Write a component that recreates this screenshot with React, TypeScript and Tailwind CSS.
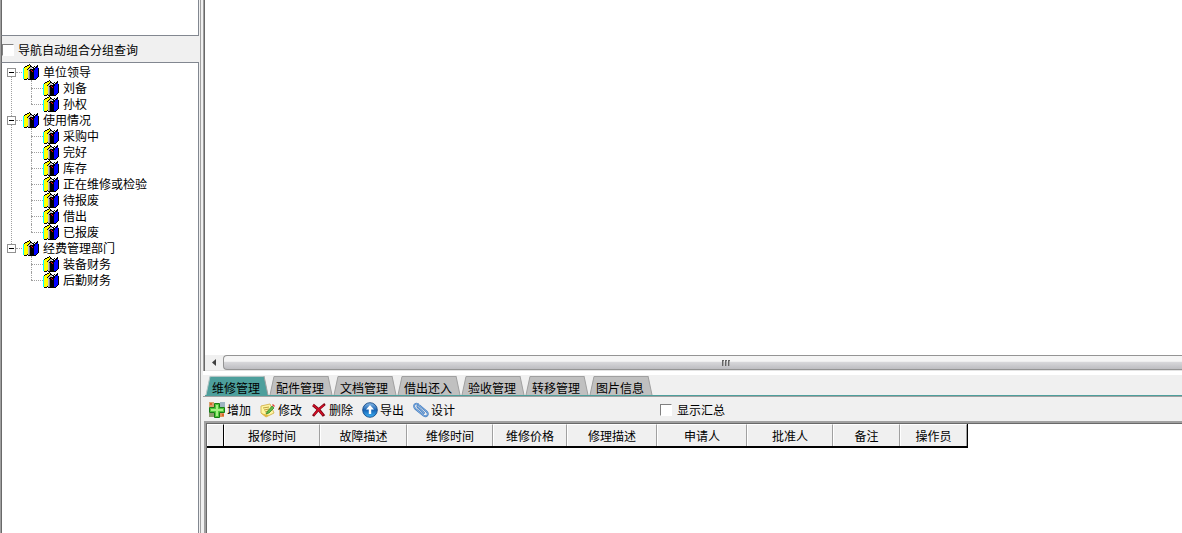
import { clsx } from 'clsx';

type TreeGroup = { label: string; items: string[] };

const tree: TreeGroup[] = [
	{ label: '单位领导', items: ['刘备', '孙权'] },
	{ label: '使用情况', items: ['采购中', '完好', '库存', '正在维修或检验', '待报废', '借出', '已报废'] },
	{ label: '经费管理部门', items: ['装备财务', '后勤财务'] },
];

const tabs = ['维修管理', '配件管理', '文档管理', '借出还入', '验收管理', '转移管理', '图片信息'];

const actions = [
	{ label: '增加', Icon: AddIcon },
	{ label: '修改', Icon: EditIcon },
	{ label: '删除', Icon: DeleteIcon },
	{ label: '导出', Icon: ExportIcon },
	{ label: '设计', Icon: ClipIcon },
];

const columns = [
	{ label: '报修时间', width: 'w-[96px]' },
	{ label: '故障描述', width: 'w-[87px]' },
	{ label: '维修时间', width: 'w-[86px]' },
	{ label: '维修价格', width: 'w-[74px]' },
	{ label: '修理描述', width: 'w-[90px]' },
	{ label: '申请人', width: 'w-[90px]' },
	{ label: '批准人', width: 'w-[86px]' },
	{ label: '备注', width: 'w-[67px]' },
	{ label: '操作员', width: 'w-[67px]' },
];

// books icon, one character per pixel
const bookPixels = [
	'......K.........',
	'....KKYK......K.',
	'..KKYYYKK..K.KK.',
	'.KYYYYKGGKKWKKB.',
	'CYYYYKGGGWKKBBBK',
	'CYYYKGGKKKKKBBBK',
	'CYYYYGKKRKKBBBBK',
	'CYYYYGDKKRKBBBBK',
	'CYYYYGDKKKKBBBBK',
	'CYYYYGDKKKKBBBBK',
	'CYYYYGDKKKKBBBBK',
	'CYYYYGDKKKKBBBBK',
	'CYYYYGDKKKKBBBBK',
	'CYYYYGDKKKKBBBK.',
	'CYYYKGDKKKKBBK..',
	'.KKK.KKKKKKKK...',
];

const bookColors: Record<string, string> = {
	K: '#000000',
	Y: '#ffff00',
	C: '#00ffff',
	G: '#c0c0c0',
	D: '#808080',
	W: '#ffffff',
	R: '#ff0000',
	B: '#0000ff',
};

function BooksIcon() {
	return (
		<svg width="16" height="16" viewBox="0 0 16 16" shapeRendering="crispEdges" className="shrink-0" aria-hidden="true">
			{bookPixels.map((row, y) =>
				row.split('').map((c, x) =>
					c === '.' ? null : <rect key={`${x}-${y}`} x={x} y={y} width="1" height="1" fill={bookColors[c]} />,
				),
			)}
		</svg>
	);
}

function AddIcon() {
	return (
		<svg width="16" height="16" viewBox="0 0 16 16" className="shrink-0" aria-hidden="true">
			<path d="M0 0h5v5H0z" fill="#d7a06f" />
			<path d="M11 0h5v5h-5z" fill="#9db4c2" />
			<path d="M0 11h5v4H0z" fill="#8f9a70" />
			<path d="M11 11h4v4h-4z" fill="#e0935a" />
			<path d="M1 1h2v2H1zM13 12h2v2h-2z" fill="#d8642c" />
			<path d="M5.500 1.500h5v4h5v5h-5v5h-5v-5h-5v-5h5z" fill="#4fc83c" stroke="#167a16" />
			<path d="M7 3h2v4h5v2H9v5H7V9H2V7h5z" fill="#a5ef84" />
		</svg>
	);
}

function EditIcon() {
	return (
		<svg width="16" height="16" viewBox="0 0 16 16" className="shrink-0" aria-hidden="true">
			<path d="M1 4l9-2 4 9-8 4-5-4z" fill="#fff6a0" stroke="#d8b95a" />
			<path d="M3 6l6-1M4 8l5-1M5 10l3-1" stroke="#bfa040" />
			<path d="M1 11l5 4 3-2-5-1z" fill="#e3b840" />
			<path d="M7 10l5-6 2 2-5 5-3 1z" fill="#61bb45" stroke="#2c7d28" strokeWidth=".7" />
			<path d="M12 3l1-1 2 2-1 1z" fill="#e24338" />
		</svg>
	);
}

function DeleteIcon() {
	return (
		<svg width="16" height="16" viewBox="0 0 16 16" className="shrink-0" aria-hidden="true">
			<path d="M2 3q6 4 11 11" fill="none" stroke="#7c0714" strokeWidth="3" />
			<path d="M14 2Q7 7 2 14" fill="none" stroke="#7c0714" strokeWidth="2.500" />
			<path d="M2 3q6 4 10 10M13 3Q7 7 3 13" fill="none" stroke="#d60d26" strokeWidth="1.500" />
		</svg>
	);
}

function ExportIcon() {
	return (
		<svg width="16" height="16" viewBox="0 0 16 16" className="shrink-0" aria-hidden="true">
			<defs>
				<linearGradient id="ball" x1="0" y1="0" x2="0" y2="1">
					<stop offset="0" stopColor="#8bbce8" />
					<stop offset=".5" stopColor="#1763b4" />
					<stop offset="1" stopColor="#3cb2f5" />
				</linearGradient>
			</defs>
			<circle cx="8" cy="8" r="7.300" fill="url(#ball)" stroke="#174b88" strokeWidth=".9" />
			<path d="M8 3l4 4.500H9.200V12H6.800V7.500H4z" fill="#fff" />
		</svg>
	);
}

function ClipIcon() {
	return (
		<svg width="16" height="16" viewBox="0 0 16 16" className="shrink-0" fill="none" strokeLinecap="round" aria-hidden="true">
			<path d="M11 11L5 5.500C3.500 4 5 2.500 6.500 3.500l7 6c3 3 0 6-3 4L2.500 7C-.5 4 2 .5 5 2" stroke="#3f78bd" strokeWidth="1.800" />
			<path d="M11 11L5 5.500C3.500 4 5 2.500 6.500 3.500l7 6c3 3 0 6-3 4L2.500 7C-.5 4 2 .5 5 2" stroke="#8fbcea" strokeWidth=".8" />
		</svg>
	);
}

function CheckBox({ label, className }: { label: string; className?: string }) {
	return (
		<label className={clsx('flex items-center', className)}>
			<input
				type="checkbox"
				className="size-3 shrink-0 appearance-none border border-t-[#808080] border-l-[#808080] border-r-white border-b-white bg-white checked:bg-[#4d9f9c]"
			/>
			{label}
		</label>
	);
}

function Tree() {
	return (
		<ul className="pl-[5px] pt-px">
			{tree.map((group, i) => (
				<li key={group.label} className="relative">
					{i < tree.length - 1 && (
						<span className="absolute left-1 top-3 h-full border-l border-dotted border-[#a0a0a0]" />
					)}
					<div className="flex h-4 items-center">
						<button
							aria-label={group.label}
							className="relative flex size-[9px] items-center justify-center border border-[#919191] bg-white"
						>
							<span className="h-px w-[5px] bg-black" />
						</button>
						<span className="mr-px w-1.5 border-t border-dotted border-[#a0a0a0]" />
						<BooksIcon />
						<span className="pl-1">{group.label}</span>
					</div>
					<ul className="pl-6">
						{group.items.map((item, n) => (
							<li key={item} className="relative flex h-4 items-center">
								<span
									className={clsx(
										'absolute left-0 top-0 border-l border-dotted border-[#a0a0a0]',
										n === group.items.length - 1 ? 'h-2' : 'h-4',
									)}
								/>
								<span className="w-3 border-t border-dotted border-[#a0a0a0]" />
								<BooksIcon />
								<span className="pl-1">{item}</span>
							</li>
						))}
					</ul>
				</li>
			))}
		</ul>
	);
}

function Sidebar() {
	return (
		<aside className="flex w-[199px] shrink-0 flex-col border-l border-[#a0a0a0]">
			<div className="h-9 border-b border-l border-r border-b-[#828790] border-l-[#696969] border-r-[#828790] bg-white" />
			<div className="flex h-[26px] items-center border-l border-[#696969] pt-0.5">
				<CheckBox label="导航自动组合分组查询" className="gap-1" />
			</div>
			<div className="flex-1 border-l border-r border-t border-l-[#696969] border-r-[#828790] border-t-[#828790] bg-white">
				<Tree />
			</div>
		</aside>
	);
}

function ScrollBar() {
	return (
		<div className="flex h-4 border-b border-[#e3e3e3] bg-[#f0f0f0]">
			<button aria-label="向左" className="flex w-[18px] items-center justify-center">
				<svg width="4" height="7" viewBox="0 0 4 7" aria-hidden="true">
					<path d="M4 0v7L0 3.500z" fill="#404040" />
				</svg>
			</button>
			<div className="flex flex-1 items-center justify-center rounded-l-sm border-y border-l border-[#949494] bg-linear-to-b from-[#f5f5f5] from-40% via-[#d6d6d9] via-50% to-[#bdbdc1]">
				<svg width="9" height="6" viewBox="0 0 9 6" shapeRendering="crispEdges" className="mr-[-46px]" aria-hidden="true">
					<path d="M0 0h2v6H0zM3 0h2v6H3zM6 0h2v6H6z" fill="#666" />
					<path d="M1 1h1v5H1zM4 1h1v5H4zM7 1h1v5H7z" fill="#aaa" />
				</svg>
			</div>
		</div>
	);
}

function TabBar() {
	return (
		<div role="tablist" className="flex h-[22px] items-end border-b border-[#a0a0a0] pl-0.5">
			<div className="flex flex-1 border-b border-[#4d9f9c]">
				{tabs.map((tab, i) => (
					<button key={tab} role="tab" aria-selected={i === 0} className="relative h-[19px] w-16">
						<svg width="64" height="19" viewBox="0 0 64 19" className="absolute inset-0" aria-hidden="true">
							<path d="M1 19L5 0h54l4 19z" fill={i === 0 ? '#4d9f9c' : '#c0c0c0'} />
							<path d="M1 19L5 .5h54" fill="none" stroke={i === 0 ? '#b5c5c5' : '#a0a0a0'} />
							<path d="M59 0l4 19" fill="none" stroke="#a0a0a0" />
						</svg>
						<span className="relative block pr-0.5 pt-1">{tab}</span>
					</button>
				))}
			</div>
		</div>
	);
}

function Toolbar() {
	return (
		<div className="flex h-6 items-center pl-1.5">
			{actions.map(({ label, Icon }) => (
				<button key={label} className="flex w-[51px] items-center gap-0.5 pt-0.5">
					<Icon />
					<span className="shrink-0">{label}</span>
				</button>
			))}
			<CheckBox label="显示汇总" className="ml-[196px] gap-[5px] pt-0.5" />
		</div>
	);
}

function RecordTable() {
	return (
		<div className="ml-px flex-1 border-l-2 border-t-2 border-[#a0a0a0] bg-white">
			<div className="h-full border-l border-t border-[#696969]">
				<table className="table-fixed border-separate border-spacing-0 border-b-2 border-r border-black">
					<thead>
						<tr className="h-[22px]">
							<th className="w-[17px] border-l border-r border-t border-l-white border-r-black border-t-white bg-[#f0f0f0] p-0" />
							{columns.map((col) => (
								<th
									key={col.label}
									className={clsx(
										'border-l border-r border-t border-l-white border-r-[#a0a0a0] border-t-white bg-[#f0f0f0] p-0 font-normal',
										col.width,
									)}
								>
									{col.label}
								</th>
							))}
						</tr>
					</thead>
				</table>
			</div>
		</div>
	);
}

export default function App() {
	return (
		<div className="flex h-screen overflow-hidden bg-[#f0f0f0] font-['Noto_Sans_CJK_SC','Liberation_Sans',sans-serif] text-[12px] leading-4 whitespace-nowrap text-black">
			<Sidebar />
			<div className="mr-0.5 w-0.5 shrink-0 border-r border-[#a0a0a0]" />
			<main className="flex min-w-0 flex-1 flex-col">
				<section className="flex flex-1 flex-col border-l border-[#a0a0a0]">
					<div className="flex flex-1 flex-col justify-end border-l border-[#696969] bg-white">
						<ScrollBar />
					</div>
				</section>
				<section className="flex h-[162px] shrink-0 flex-col border-t-4 border-white">
					<TabBar />
					<Toolbar />
					<RecordTable />
				</section>
			</main>
		</div>
	);
}
